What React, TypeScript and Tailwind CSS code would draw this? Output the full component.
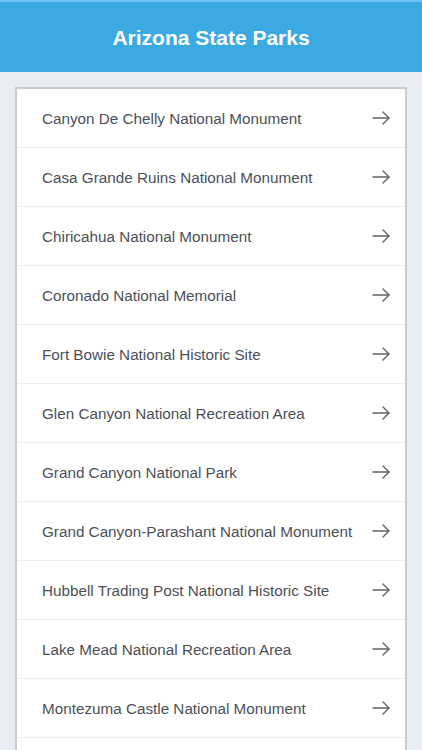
import React from "react";

const parks = [
  "Canyon De Chelly National Monument",
  "Casa Grande Ruins National Monument",
  "Chiricahua National Monument",
  "Coronado National Memorial",
  "Fort Bowie National Historic Site",
  "Glen Canyon National Recreation Area",
  "Grand Canyon National Park",
  "Grand Canyon-Parashant National Monument",
  "Hubbell Trading Post National Historic Site",
  "Lake Mead National Recreation Area",
  "Montezuma Castle National Monument",
];

function Arrow() {
  return (
    <svg width="18" height="14" viewBox="0 0 18 14" fill="none" stroke="#5d6168" strokeWidth="1.4" strokeLinecap="round" strokeLinejoin="round">
      <path d="M1 7h16" />
      <path d="M11 1l6 6-6 6" />
    </svg>
  );
}

export default function App() {
  return (
    <div className="w-[422px] h-[750px] overflow-hidden bg-[#e9eef5] flex flex-col" style={{ fontFamily: '"Liberation Sans", Arial, sans-serif' }}>
      <div className="h-[72px] shrink-0 bg-[#3caae2] border-t-2 border-[#6cc3ef] flex items-center justify-center">
        <h1 className="text-white text-[21px] font-bold pt-[1px]">Arizona State Parks</h1>
      </div>
      <div className="pt-[15px] px-[15px]">
        <div className="bg-white border-2 border-[#c9cdd3]">
          {parks.map((p) => (
            <div key={p} className="h-[59px] flex items-center justify-between pl-[25px] pr-[15px] border-b border-[#eceef1]">
              <span className="text-[15.25px] text-[#4b5058] pt-[2px]">{p}</span>
              <Arrow />
            </div>
          ))}
          <div className="h-[59px]" />
        </div>
      </div>
    </div>
  );
}
